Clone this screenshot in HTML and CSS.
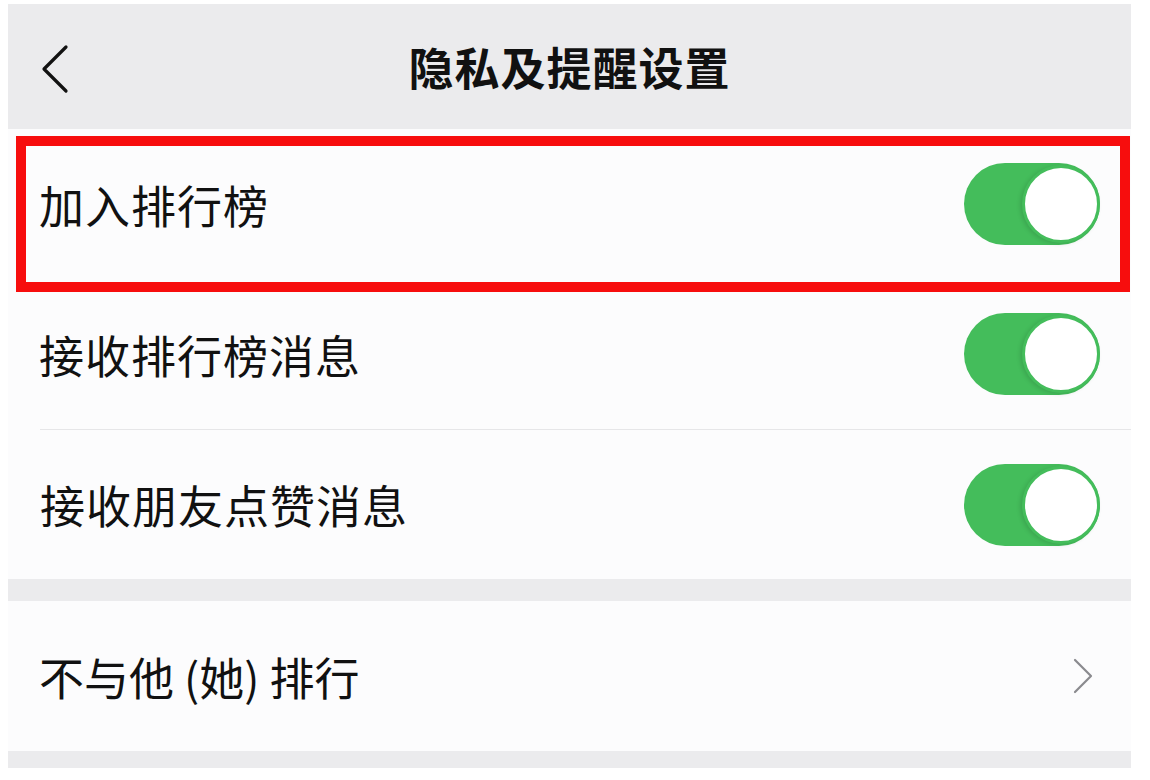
FILE: index.html
```html
<!DOCTYPE html>
<html lang="zh-CN">
<head>
    <meta charset="UTF-8">
    <meta name="viewport" content="width=device-width, initial-scale=1.0">
    <title>隐私及提醒设置</title>
    <link rel="stylesheet" href="styles.css">
</head>
<body>
    <div class="page">
        <!-- Top bar -->
        <div class="topbar">
            <svg class="back" width="30" height="50" viewBox="0 0 30 50">
                <polyline points="25,3 3,25 25,47" fill="none" stroke="#111" stroke-width="3.2" stroke-linecap="round" stroke-linejoin="round"/>
            </svg>
            <h1>隐私及提醒设置</h1>
        </div>

        <!-- Switch group -->
        <div class="group">
            <div class="row">
                <span class="label">加入排行榜</span>
                <span class="switch on"><span class="knob"></span></span>
            </div>
            <div class="row">
                <span class="label">接收排行榜消息</span>
                <span class="switch on"><span class="knob"></span></span>
            </div>
            <div class="row line">
                <span class="label">接收朋友点赞消息</span>
                <span class="switch on"><span class="knob"></span></span>
            </div>
            <div class="mark"></div>
        </div>

        <div class="gap"></div>

        <div class="group">
            <div class="row">
                <span class="label tight">不与他 (她) 排行</span>
                <svg class="arrow" width="22" height="36" viewBox="0 0 22 36">
                    <polyline points="3,2 19,18 3,34" fill="none" stroke="#8a8a8e" stroke-width="2.2" stroke-linecap="round" stroke-linejoin="round"/>
                </svg>
            </div>
        </div>

        <div class="gap bottom"></div>
    </div>
</body>
</html>
```

FILE: styles.css
```css
/* General body styling */
body {
    font-family: "Noto Sans CJK SC", "Noto Sans", sans-serif;
    margin: 0;
    padding: 0;
    background: #ffffff;
    color: #111;
}

.page {
    width: 1123px;
    margin: 4px 0 0 8px;
    background: #fcfcfd;
}

/* Top bar */
.topbar {
    height: 125px;
    background: #ebebed;
    display: flex;
    align-items: center;
    justify-content: center;
    position: relative;
}

.topbar .back {
    position: absolute;
    left: 33px;
    top: 40px;
}

.topbar h1 {
    margin: 0;
    font-size: 45px;
    font-weight: bold;
    letter-spacing: 1px;
}

/* Rows */
.group {
    position: relative;
}

.row {
    height: 150px;
    display: flex;
    align-items: center;
    justify-content: space-between;
    padding: 0 31px 0 31px;
}

.row.line {
    border-top: 1px solid #e6e6e8;
    margin-left: 32px;
    padding-left: 0;
    height: 149px;
}

.label {
    font-size: 45px;
    letter-spacing: 1px;
}

.label.tight {
    letter-spacing: 0;
}

/* Switch */
.switch {
    width: 136px;
    height: 82px;
    border-radius: 41px;
    background: #44bd5b;
    position: relative;
    display: block;
}

.switch .knob {
    position: absolute;
    right: 0;
    top: 2px;
    width: 72px;
    height: 72px;
    border-radius: 50%;
    background: #ffffff;
    border: 3px solid #44bd5b;
    box-shadow: -2px 1px 4px rgba(0, 0, 0, 0.12);
}

.arrow {
    margin-right: 6px;
}

/* Red annotation box */
.mark {
    position: absolute;
    left: 8px;
    top: 7px;
    width: 1094px;
    height: 136px;
    border: 10px solid #f70d0d;
}

.gap {
    height: 22px;
    background: #ebebed;
}

.gap.bottom {
    height: 17px;
}
```
